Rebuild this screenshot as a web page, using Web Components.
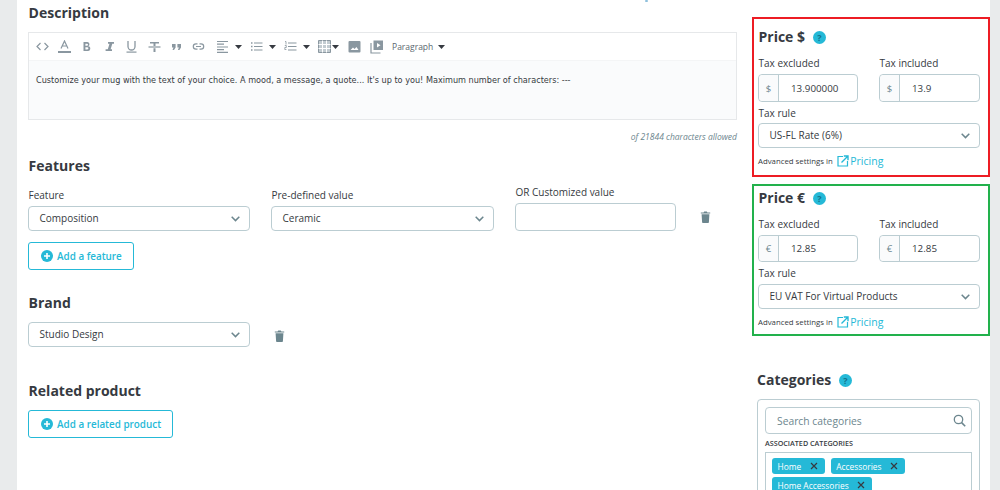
<!DOCTYPE html>
<html><head><meta charset="utf-8"><title>Product</title>
<style>
html,body{margin:0;padding:0;height:490px;overflow:hidden;background:#e9ebec;font-family:"Open Sans",sans-serif;color:#363a41}
</style></head><body>
<x-page>
  <x-main slot="main">
    <x-heading>Description</x-heading>
    <x-editor text="Customize your mug with the text of your choice. A mood, a message, a quote... It's up to you! Maximum number of characters: ---" note="of 21844 characters allowed"></x-editor>
    <x-heading style="margin-top:13px">Features</x-heading>
    <x-row style="margin-top:12px">
      <x-field label="Feature" style="width:222px"><x-select value="Composition"></x-select></x-field>
      <x-field label="Pre-defined value" style="width:223px;margin-left:21px"><x-select value="Ceramic"></x-select></x-field>
      <x-field label="OR Customized value" style="width:161px;margin-left:21px;margin-top:-3px"><x-input></x-input></x-field>
      <x-trash style="margin-left:24px;margin-bottom:8px"></x-trash>
    </x-row>
    <x-add style="margin-top:11px">Add a feature</x-add>
    <x-heading style="margin-top:23px">Brand</x-heading>
    <x-row style="margin-top:9px">
      <x-field style="width:222px"><x-select value="Studio Design"></x-select></x-field>
      <x-trash style="margin-left:24px;margin-bottom:5px"></x-trash>
    </x-row>
    <x-heading style="margin-top:34px">Related product</x-heading>
    <x-add style="margin-top:9px">Add a related product</x-add>
  </x-main>
  <x-side slot="side">
    <x-price title="Price $" sym="$" ex="13.900000" inc="13.9" rule="US-FL Rate (6%)" color="#ed1c24"></x-price>
    <x-price compact title="Price €" sym="€" ex="12.85" inc="12.85" rule="EU VAT For Virtual Products" color="#22b14c" style="margin-top:7px"></x-price>
    <x-categories style="margin-top:34px"></x-categories>
  </x-side>
</x-page>
<script>
const def=(n,html)=>customElements.define(n,class extends HTMLElement{
  connectedCallback(){ if(this.shadowRoot) return; const r=this.attachShadow({mode:'open'}); r.innerHTML=typeof html==='function'?html(this):html; }
});
const chev=`<svg width="9" height="6" viewBox="0 0 9 6"><path d="M.7.8l3.800 3.800L8.300.8" fill="none" stroke="#6c868e" stroke-width="1.500"/></svg>`;
const caret=`<svg width="7" height="4" viewBox="0 0 7 4" style="flex:none"><path d="M0 0h7L3.500 4z" fill="#363a41"/></svg>`;
const help=`<svg width="13" height="13" viewBox="0 0 13 13"><circle cx="6.500" cy="6.500" r="6.500" fill="#25b9d7"/><text x="6.500" y="9.700" text-anchor="middle" font-family="Open Sans" font-size="9" font-weight="700" fill="#14728a">?</text></svg>`;

def('x-page',`<style>:host{display:block;height:490px;overflow:hidden}
.wrap{position:relative;display:flex;margin-left:17px;width:973px;height:490px;background:#fff;overflow:hidden}
.m{width:720px;padding-left:11px;flex:none}.s{width:238px;margin-left:4px;flex:none;padding-top:17px}
.speck{position:absolute;left:628px;top:0;width:3px;height:2px;background:#8fc0dc;border-radius:1px}</style>
<div class="wrap"><span class="speck"></span><div class="m"><slot name="main"></slot></div><div class="s"><slot name="side"></slot></div></div>`);
def('x-main',`<style>:host{display:block;padding-top:3px;width:709px}</style><slot></slot>`);
def('x-side',`<style>:host{display:block}</style><slot></slot>`);
def('x-heading',`<style>:host{display:block;font-size:14px;font-weight:700;line-height:20px;color:#363a41;padding-left:.6px}</style><slot></slot>`);
def('x-row',`<style>:host{display:flex;align-items:flex-end}</style><slot></slot>`);
def('x-field',h=>`<style>:host{display:block;flex:none}.l{font-size:10px;line-height:15px;color:#363a41;margin-bottom:3px;padding-left:.5px}</style>${h.getAttribute('label')?`<div class="l">${h.getAttribute('label')}</div>`:''}<slot></slot>`);
def('x-select',h=>`<style>:host{display:flex;align-items:center;justify-content:space-between;box-sizing:border-box;height:25px;border:1px solid #bbcdd2;border-radius:4px;background:#fff;padding:0 9px 0 10.500px;font-size:10px;color:#363a41}span{margin-bottom:2px}</style><span>${h.getAttribute('value')}</span>${chev}`);
def('x-input',`<style>:host{display:block;box-sizing:border-box;height:28px;border:1px solid #bbcdd2;border-radius:4px;background:#fff}</style>`);
def('x-trash',`<style>:host{display:block;flex:none;width:11px;height:12px;line-height:0}</style><svg width="11" height="12" viewBox="0 0 11 12"><path d="M1.600 3.200h7.800l-.5 8a.8.8 0 0 1-.8.8H2.900a.8.8 0 0 1-.8-.8zM.8 1.400h2.800L4.200.5h2.600l.6.9h2.800v1.100H.8z" fill="#6c868e"/></svg>`);
def('x-add',`<style>:host{display:flex;align-items:center;box-sizing:border-box;width:fit-content;height:28px;border:1px solid #25b9d7;border-radius:3px;padding:0 11px 0 12px;font-size:9.900px;font-weight:600;color:#25b9d7;background:#fff}
svg{margin-right:4px;flex:none}</style><svg width="12" height="12" viewBox="0 0 12 12"><circle cx="6" cy="6" r="6" fill="#25b9d7"/><path d="M6 3v6M3 6h6" stroke="#fff" stroke-width="1.600"/></svg><slot></slot>`);

const c='#8a97a0';
const ic={
 code:`<path d="M4.500 3L1 6.500 4.500 10M8.500 3L12 6.500 8.500 10" fill="none" stroke="${c}" stroke-width="1.200"/>`,
 a:`<path d="M3 8.500L6.500 1 10 8.500M4.300 6h4.400" fill="none" stroke="${c}" stroke-width="1.200"/><rect x="0" y="11" width="13" height="2" fill="${c}"/>`,
 b:`<path d="M3.500 2h3.700a2.200 2.200 0 0 1 1 4.200A2.400 2.400 0 0 1 7.500 11H3.500zM5.400 3.700v2h1.600a1 1 0 0 0 0-2zM5.400 7.200v2.200h1.900a1.100 1.100 0 0 0 0-2.200z" fill="${c}" fill-rule="evenodd"/>`,
 i:`<path d="M5 2h6v1.700H9.300L7.600 9.300H9V11H2.600V9.300h2.200L6.500 3.700H5z" fill="${c}"/>`,
 u:`<path d="M3 1v5.500a3.500 3.500 0 0 0 7 0V1" fill="none" stroke="${c}" stroke-width="1.300"/><rect x="1.500" y="11.500" width="10" height="1.200" fill="${c}"/>`,
 s:`<path d="M2 2h9v1.600H7.500V6h-2V3.600H2zM5.500 8.200h2V12h-2z" fill="${c}"/><rect x="0.500" y="6.400" width="12" height="1.200" fill="${c}"/>`,
 q:`<path d="M2 4h3.600v3.400L4 10H2.500l1-2.500H2zM7.400 4H11v3.400L9.400 10H7.900l1-2.500H7.400z" fill="${c}"/>`,
 link:`<path d="M5.500 3.800H4a2.700 2.700 0 0 0 0 5.400h1.500M7.500 3.800H9a2.700 2.700 0 0 1 0 5.400H7.500M4 6.500h5" fill="none" stroke="${c}" stroke-width="1.200"/>`,
 al:`<path d="M1 1.500h11M1 4.200h7M1 7h11M1 9.700h7M1 12.400h11" stroke="${c}" stroke-width="1.200"/>`,
 ul:`<path d="M4 3h8.500M4 6.500h8.500M4 10h8.500" stroke="${c}" stroke-width="1.200"/><path d="M1 3h1.500M1 6.500h1.500M1 10h1.500" stroke="${c}" stroke-width="1.600"/>`,
 ol:`<path d="M4 3h8.500M4 6.500h8.500M4 10h8.500" stroke="${c}" stroke-width="1.200"/><path d="M1 1.500h1v3M.8 5.500H2.300v2H.8v2h1.600" fill="none" stroke="${c}" stroke-width=".8"/>`,
 tb:`<path d="M.5.5h12v12H.5z" fill="#c3ccd1" stroke="${c}"/><path d="M4.500.5v12M8.500.5v12M.5 4.500h12M.5 8.500h12" stroke="#fff" stroke-width="1"/>`,
 img:`<rect x=".5" y="1" width="12" height="11.500" rx="1" fill="${c}"/><path d="M2.500 10l2.500-2.500 1.500 1.500 2-2 2 3z" fill="#fff"/>`,
 vid:`<path d="M3.500 0.500h9.500v9.500H3.500z" fill="${c}"/><path d="M7 3l3.500 2.200L7 7.400z" fill="#fff"/><path d="M1 3v10h9.500" fill="none" stroke="${c}" stroke-width="1.200"/>`
};
const btn=(k,w=22.4)=>`<span class="b" style="width:${w}px"><svg width="13" height="14" viewBox="0 0 13 14">${ic[k]}</svg></span>`;
const car=(w)=>`<span class="b" style="width:${w}px">${caret}</span>`;
const sp=w=>`<span style="width:${w}px;flex:none"></span>`;
def('x-editor',h=>`<style>:host{display:block;margin-top:9px}
.box{box-sizing:border-box;height:88px;border:1px solid #e6e8ea;background:#fafbfc;display:flex;flex-direction:column}
.tb{height:28px;background:#fff;display:flex;align-items:center;padding-left:1.900px;flex:none;border-bottom:1px solid #f4f5f6;box-sizing:border-box}
.b{display:inline-flex;align-items:center;justify-content:center;height:16px;flex:none}
.t{font-family:"DejaVu Sans",sans-serif;font-size:8.150px;line-height:12px;color:#363a41;padding:13px 7px}
.p{font-size:8.500px;color:#5b6870;margin-left:4.500px}
.n{font-size:8.500px;font-style:italic;color:#6c868e;text-align:right;margin-top:11px;line-height:12px}</style>
<div class="box"><div class="tb">${['code','a','b','i','u','s','q','link'].map(k=>btn(k)).join('')}${btn('al',24)}${car(9)}${sp(1.5)}${btn('ul',23)}${car(9)}${sp(2)}${btn('ol',23)}${car(9)}${sp(5)}${btn('tb',17)}${car(6)}${sp(5)}${btn('img',22)}${btn('vid',22)}<span class="p">Paragraph</span>${sp(5)}${caret}</div>
<div class="t">${h.getAttribute('text')}</div></div><div class="n">${h.getAttribute('note')}</div>`);
def('x-money',h=>`<style>:host{display:flex;box-sizing:border-box;height:var(--mh,28px);border:1px solid #bbcdd2;border-radius:4px;background:#fff;font-size:9.800px;color:#363a41}
.s{box-sizing:border-box;width:20px;background:#fafbfc;border-right:1px solid #bbcdd2;display:flex;align-items:center;justify-content:center;color:#6c868e;font-size:9.500px;border-radius:4px 0 0 4px}
.v{padding-left:12px;display:flex;align-items:center}</style><span class="s">${h.getAttribute('sym')}</span><span class="v">${h.getAttribute('val')}</span>`);
def('x-price',h=>{const a=k=>h.getAttribute(k);const cp=h.hasAttribute('compact');return `<style>:host{display:block;box-sizing:border-box;height:${cp?152:160}px;border:2px solid ${a('color')};padding:${cp?2:8}px 8px 0 4px;--mh:${cp?27:28}px}
.h{display:flex;align-items:center;font-size:14px;font-weight:700;line-height:20px;gap:8px;padding-left:.5px}
.g{display:flex;justify-content:space-between;margin-top:9px}.f{width:100px}.f+.f{width:101px}
.l{font-size:10px;line-height:15px;margin-bottom:3px;padding-left:.5px}.r{margin-top:4px}.r .l{margin-bottom:${cp?3:2}px}
.a{display:flex;align-items:center;font-size:7.800px;color:#363a41;margin-top:5px;line-height:16px}
.a b{font-weight:400;font-size:10.500px;color:#25b9d7;margin-left:1px}.a svg{margin-left:4.500px}</style>
<div class="h"><span>${a('title')}</span>${help}</div>
<div class="g"><div class="f"><div class="l">Tax excluded</div><x-money sym="${a('sym')}" val="${a('ex')}"></x-money></div><div class="f"><div class="l">Tax included</div><x-money sym="${a('sym')}" val="${a('inc')}"></x-money></div></div>
<div class="r"><div class="l">Tax rule</div><x-select value="${a('rule')}"></x-select></div>
<div class="a">Advanced settings in <svg width="12" height="12" viewBox="0 0 12 12"><path d="M6 1.500H1v9.500h9.500V6" fill="none" stroke="#25b9d7" stroke-width="1.200"/><path d="M4.500 7.500L10.500 1.500M6.800 1h4.200v4.200" fill="none" stroke="#25b9d7" stroke-width="1.400"/></svg><b>Pricing</b></div>`});
def('x-tag',`<style>:host{display:inline-flex;align-items:center;height:16px;box-sizing:border-box;background:#25b9d7;color:#fff;border-radius:3px;padding:0 7px 0 5.500px;font-size:8.400px;gap:8.500px}
svg{flex:none}</style><slot></slot><svg width="8" height="8" viewBox="0 0 8 8"><path d="M1 1l6 6M7 1L1 7" stroke="#363a41" stroke-width="1.200"/></svg>`);
def('x-categories',`<style>:host{display:block;padding-left:5px}
.h{display:flex;align-items:center;font-size:14px;font-weight:700;line-height:20px;gap:8px}
.box{box-sizing:border-box;width:223px;border:1px solid #bbcdd2;border-radius:4px;margin-top:9px;padding:7px;height:120px}
.s{display:flex;align-items:center;justify-content:space-between;height:27px;box-sizing:border-box;border:1px solid #bbcdd2;border-radius:4px;padding:0 5px 0 11px;font-size:10.300px;color:#6c868e}
.c{font-size:7.200px;font-weight:600;text-transform:uppercase;line-height:10px;margin-top:4px;color:#363a41}
.tags{border:1px solid #bbcdd2;margin-top:4px;padding:5px 6px;display:flex;flex-wrap:wrap;gap:3px 6px;height:80px;box-sizing:border-box;align-content:flex-start}</style>
<div class="h"><span>Categories</span>${help}</div>
<div class="box"><div class="s"><span>Search categories</span><svg width="13" height="13" viewBox="0 0 13 13"><circle cx="5.500" cy="5.500" r="4.200" fill="none" stroke="#6c868e" stroke-width="1.300"/><path d="M8.600 8.600l3.600 3.600" stroke="#6c868e" stroke-width="1.600"/></svg></div>
<div class="c">Associated categories</div>
<div class="tags"><x-tag>Home</x-tag><x-tag>Accessories</x-tag><x-tag>Home Accessories</x-tag></div></div>`);
</script>
</body></html>
